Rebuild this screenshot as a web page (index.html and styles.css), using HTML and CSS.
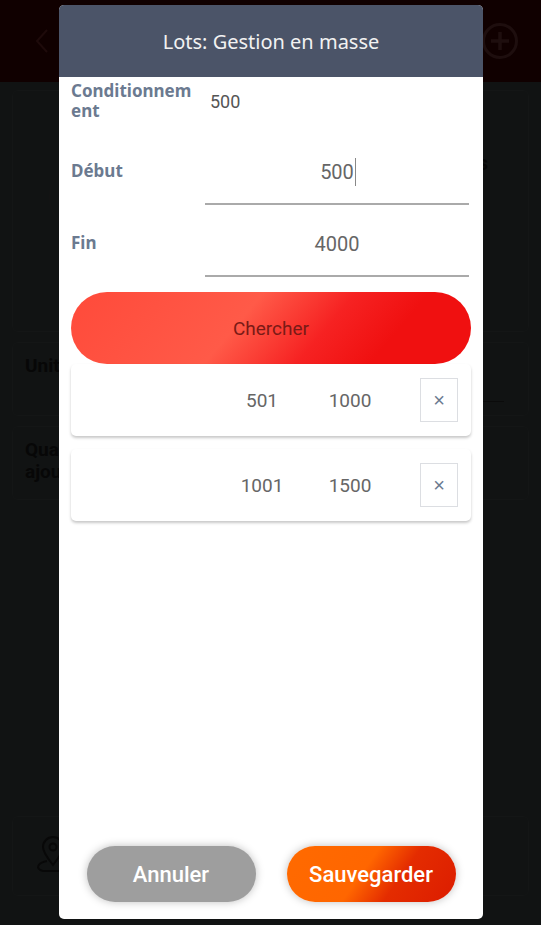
FILE: index.html
```html
<!DOCTYPE html>
<html lang="fr">
<head>
    <meta charset="UTF-8">
    <meta name="viewport" content="width=device-width, initial-scale=1.0">
    <title>Lots: Gestion en masse</title>
    <link rel="stylesheet" href="styles.css">
</head>
<body>
    <div class="app">
        <header class="app-header">
            <svg class="back" width="16" height="26" viewBox="0 0 16 26"><path d="M13 2 L3 13 L13 24" fill="none" stroke="#1e0a0a" stroke-width="2"/></svg>
            <svg class="add" width="38" height="38" viewBox="0 0 38 38"><circle cx="19" cy="19" r="16.5" fill="none" stroke="#1e0e0e" stroke-width="3"/><path d="M19 10 V28 M10 19 H28" stroke="#1e0e0e" stroke-width="3.5"/></svg>
        </header>
        <div class="app-body">
            <div class="bg-card bg-card-top">
                <div class="avatar"></div>
                <span class="bg-s">s</span>
            </div>
            <div class="bg-card bg-card-row">
                <span class="bg-text">Unité</span>
                <div class="bg-line"></div>
            </div>
            <div class="bg-card bg-card-row">
                <span class="bg-text">Quantité<br>ajoutée</span>
            </div>
            <div class="bg-card bg-card-bottom">
                <svg width="40" height="44" viewBox="0 0 40 44"><path d="M20 32 C12 22 10 18 10 14 a10 10 0 0 1 20 0 c0 4-2 8-10 18z" fill="none" stroke="#080808" stroke-width="2"/><circle cx="20" cy="14" r="3.5" fill="none" stroke="#080808" stroke-width="2"/><path d="M14 28 C4 30 2 36 10 38 H30 C38 36 36 30 26 28" fill="none" stroke="#080808" stroke-width="2"/></svg>
            </div>
        </div>
    </div>

    <div class="modal">
        <div class="modal-header">Lots: Gestion en masse</div>
        <div class="modal-body">
            <div class="info-row">
                <span class="label label-wrap">Conditionnement</span>
                <span class="info-value">500</span>
            </div>
            <div class="field-row">
                <span class="label">Début</span>
                <div class="field"><span class="field-value">500<i class="caret"></i></span></div>
            </div>
            <div class="field-row">
                <span class="label">Fin</span>
                <div class="field"><span class="field-value">4000</span></div>
            </div>
            <button class="search-btn">Chercher</button>
            <div class="lot-card">
                <span class="lot-cell">501</span>
                <span class="lot-cell">1000</span>
                <button class="remove-btn">&times;</button>
            </div>
            <div class="lot-card">
                <span class="lot-cell">1001</span>
                <span class="lot-cell">1500</span>
                <button class="remove-btn">&times;</button>
            </div>
        </div>
        <div class="modal-footer">
            <button class="btn btn-cancel">Annuler</button>
            <button class="btn btn-save">Sauvegarder</button>
        </div>
    </div>
</body>
</html>
```

FILE: styles.css
```css
body {
    margin: 0;
    width: 541px;
    height: 925px;
    overflow: hidden;
    position: relative;
    background-color: #111313;
    font-family: Roboto, "Noto Sans", sans-serif;
}
.app-header {
    height: 82px;
    background-color: #100000;
    display: flex;
    justify-content: space-between;
    align-items: center;
    padding: 0 22px 0 34px;
}
.app-body {
    display: flex;
    flex-direction: column;
    gap: 10px;
    padding: 0 12px;
}
.bg-card {
    border: 1px solid #141616;
    border-radius: 6px;
    background-color: #111313;
}
.bg-card-top {
    height: 240px;
    margin-top: 8px;
    position: relative;
}
.avatar {
    position: absolute;
    left: 36px;
    top: 70px;
    width: 70px;
    height: 70px;
    border-radius: 50%;
    border: 1px solid #141414;
}
.bg-s {
    position: absolute;
    right: 40px;
    top: 60px;
    color: #070707;
    font-size: 20px;
    font-weight: bold;
}
.bg-card-row {
    height: 74px;
    padding: 12px;
    box-sizing: border-box;
    position: relative;
}
.bg-text {
    color: #070707;
    font-size: 19px;
    font-weight: bold;
    line-height: 22px;
}
.bg-line {
    position: absolute;
    left: 180px;
    right: 24px;
    top: 58px;
    height: 1px;
    background-color: #0b0b0b;
}
.bg-card-bottom {
    margin-top: 306px;
    height: 80px;
    padding: 16px 20px;
    box-sizing: border-box;
}

.modal {
    position: absolute;
    left: 59px;
    top: 5px;
    width: 424px;
    height: 914px;
    background-color: #fff;
    border-radius: 5px;
    display: flex;
    flex-direction: column;
    overflow: hidden;
}
.modal-header {
    height: 72px;
    flex-shrink: 0;
    background-color: #4b5468;
    color: #f2f2f2;
    font-family: "Noto Sans", sans-serif;
    font-size: 20px;
    display: flex;
    align-items: center;
    justify-content: center;
}
.modal-body {
    flex: 1;
    padding: 0 12px;
}
.label {
    width: 134px;
    flex-shrink: 0;
    color: #6b7a90;
    font-family: "Noto Sans", sans-serif;
    font-size: 17px;
    font-weight: bold;
    line-height: 20px;
    word-break: break-all;
}
.label-wrap {
    width: 127px;
    margin-right: 7px;
}
.info-row {
    display: flex;
    align-items: center;
    padding-top: 1px;
    height: 46px;
}
.info-value {
    color: #555;
    font-size: 18px;
    padding-left: 5px;
}
.field-row {
    display: flex;
    align-items: center;
    height: 72px;
}
.field-row .label {
    padding-top: 4px;
}
.info-row + .field-row {
    margin-top: 9px;
}
.field {
    flex: 1;
    height: 72px;
    margin-right: 2px;
    border-bottom: 2px solid #aaa;
    box-sizing: border-box;
    display: flex;
    align-items: center;
    justify-content: center;
    padding-top: 8px;
}
.field-value {
    color: #666;
    font-size: 20px;
    position: relative;
}
.caret {
    position: absolute;
    right: -2px;
    top: -2px;
    width: 1px;
    height: 28px;
    background-color: #888;
}
.search-btn {
    display: block;
    width: 100%;
    height: 72px;
    margin-top: 15px;
    border: none;
    border-radius: 36px;
    background: linear-gradient(130deg, #ff4a3a 0%, #ff5a48 42%, #f62222 62%, #f01010 78%, #f01010 100%);
    color: #7a1a16;
    font-family: Roboto, sans-serif;
    font-size: 19px;
}
.lot-card {
    height: 72px;
    margin-bottom: 13px;
    border-radius: 5px;
    background-color: #fff;
    box-shadow: 0 2px 3px rgba(0, 0, 0, 0.22);
    display: flex;
    align-items: center;
    justify-content: flex-end;
    padding-right: 13px;
}
.lot-cell {
    width: 88px;
    text-align: center;
    color: #666;
    font-size: 19px;
}
.lot-cell + .lot-cell {
    margin-right: 26px;
}
.remove-btn {
    width: 38px;
    height: 44px;
    border: 1px solid #dcdee2;
    background-color: #fff;
    color: #6b7a90;
    font-size: 20px;
    padding: 0;
}
.modal-footer {
    display: flex;
    justify-content: center;
    gap: 31px;
    padding-bottom: 17px;
}
.btn {
    width: 169px;
    height: 56px;
    border: none;
    border-radius: 28px;
    color: #fff;
    font-family: Roboto, sans-serif;
    font-size: 22px;
    font-weight: 500;
    box-shadow: 0 0 8px rgba(0, 0, 0, 0.25);
}
.btn-cancel {
    background-color: #9e9e9e;
}
.btn-save {
    background: linear-gradient(125deg, #ff6a00 0%, #ff6600 45%, #e42c00 65%, #dc1c00 100%);
}
```
